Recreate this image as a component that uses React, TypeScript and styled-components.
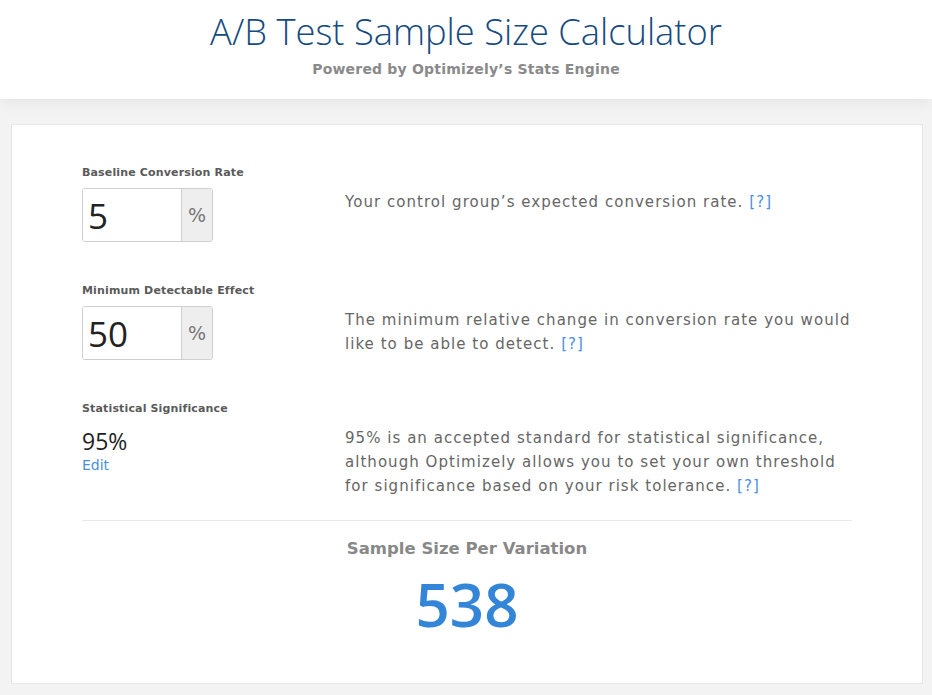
import React from "react";
import styled, { createGlobalStyle } from "styled-components";

const Global = createGlobalStyle`
  html, body { margin: 0; padding: 0; }
  body { background: #f3f3f3; font-family: "DejaVu Sans", "Open Sans", sans-serif; }
`;

const Header = styled.header`
  background: #fff;
  height: 99px;
  box-sizing: border-box;
  padding-top: 7px;
  text-align: center;
  box-shadow: 0 4px 14px rgba(0, 0, 0, 0.06);
  position: relative;
`;

const Title = styled.h1`
  margin: 0;
  font-family: "Open Sans", sans-serif;
  font-weight: 300;
  font-size: 36.3px;
  line-height: 48px;
  color: #154a80;
`;

const Subtitle = styled.div`
  margin-top: 5px;
  font-weight: 700;
  font-size: 14px;
  line-height: 18px;
  letter-spacing: 0.2px;
  color: #8a8a8a;
`;

const Main = styled.main`
  padding: 25px 9px 10px 11px;
`;

const Card = styled.section`
  background: #fff;
  border: 1px solid #e6e6e6;
  padding: 40px 70px 44px 70px;
`;

const Row = styled.div`
  display: grid;
  grid-template-columns: 263px 1fr;
  & + & { margin-top: 41px; }
`;

const Field = styled.div`
  display: flex;
  flex-direction: column;
`;

const Label = styled.label`
  font-size: 11px;
  line-height: 16px;
  font-weight: 700;
  letter-spacing: 0.15px;
  color: #5a5a5a;
  margin-bottom: 7px;
`;

const InputGroup = styled.div`
  display: flex;
  width: 131px;
  height: 54px;
  box-sizing: border-box;
  border: 1px solid #cfcfcf;
  border-radius: 3px;
  overflow: hidden;
`;

const Input = styled.input`
  width: 98px;
  border: none;
  outline: none;
  padding: 0 0 0 5px;
  font-family: "Open Sans", sans-serif;
  font-size: 35px;
  color: #222;
  box-sizing: border-box;
  background: #fff;
`;

const Addon = styled.span`
  flex: 1;
  border-left: 1px solid #cfcfcf;
  background: #eee;
  color: #777;
  font-size: 19px;
  display: flex;
  align-items: center;
  justify-content: center;
`;

const Value = styled.div`
  font-family: "Open Sans", sans-serif;
  font-size: 23px;
  line-height: 26px;
  color: #222;
  margin-top: 4px;
`;

const Edit = styled.a`
  font-size: 14px;
  line-height: 16px;
  color: #4a8fe2;
  text-decoration: none;
  margin-top: 3px;
`;

const Desc = styled.p`
  margin: 25px -5px 0 0;
  font-size: 15px;
  line-height: 24px;
  letter-spacing: 1.04px;
  color: #666;
`;

const Help = styled.a`
  color: #4a8fe2;
  text-decoration: none;
`;

const Divider = styled.hr`
  border: none;
  border-top: 1px solid #e8e8e8;
  margin: 22px 0 0 0;
`;

const Result = styled.div`
  text-align: center;
  padding-top: 17px;
`;

const ResultLabel = styled.div`
  font-size: 16.5px;
  line-height: 22px;
  font-weight: 700;
  color: #888;
`;

const ResultValue = styled.div`
  font-family: "Open Sans", sans-serif;
  font-size: 60px;
  line-height: 70px;
  font-weight: 600;
  color: #3385d8;
  margin-top: 9px;
`;

export default function App() {
  return (
    <>
      <Global />
      <Header>
        <Title>A/B Test Sample Size Calculator</Title>
        <Subtitle>Powered by Optimizely’s Stats Engine</Subtitle>
      </Header>
      <Main>
        <Card>
          <Row>
            <Field>
              <Label>Baseline Conversion Rate</Label>
              <InputGroup>
                <Input defaultValue="5" />
                <Addon>%</Addon>
              </InputGroup>
            </Field>
            <Desc>
              Your control group’s expected conversion rate. <Help href="#">[?]</Help>
            </Desc>
          </Row>
          <Row>
            <Field>
              <Label>Minimum Detectable Effect</Label>
              <InputGroup>
                <Input defaultValue="50" />
                <Addon>%</Addon>
              </InputGroup>
            </Field>
            <Desc>
              The minimum relative change in conversion rate you would like to be able to detect.{" "}
              <Help href="#">[?]</Help>
            </Desc>
          </Row>
          <Row>
            <Field>
              <Label>Statistical Significance</Label>
              <Value>95%</Value>
              <Edit href="#">Edit</Edit>
            </Field>
            <Desc>
              95% is an accepted standard for statistical significance, although Optimizely allows you
              to set your own threshold for significance based on your risk tolerance.{" "}
              <Help href="#">[?]</Help>
            </Desc>
          </Row>
          <Divider />
          <Result>
            <ResultLabel>Sample Size Per Variation</ResultLabel>
            <ResultValue>538</ResultValue>
          </Result>
        </Card>
      </Main>
    </>
  );
}
